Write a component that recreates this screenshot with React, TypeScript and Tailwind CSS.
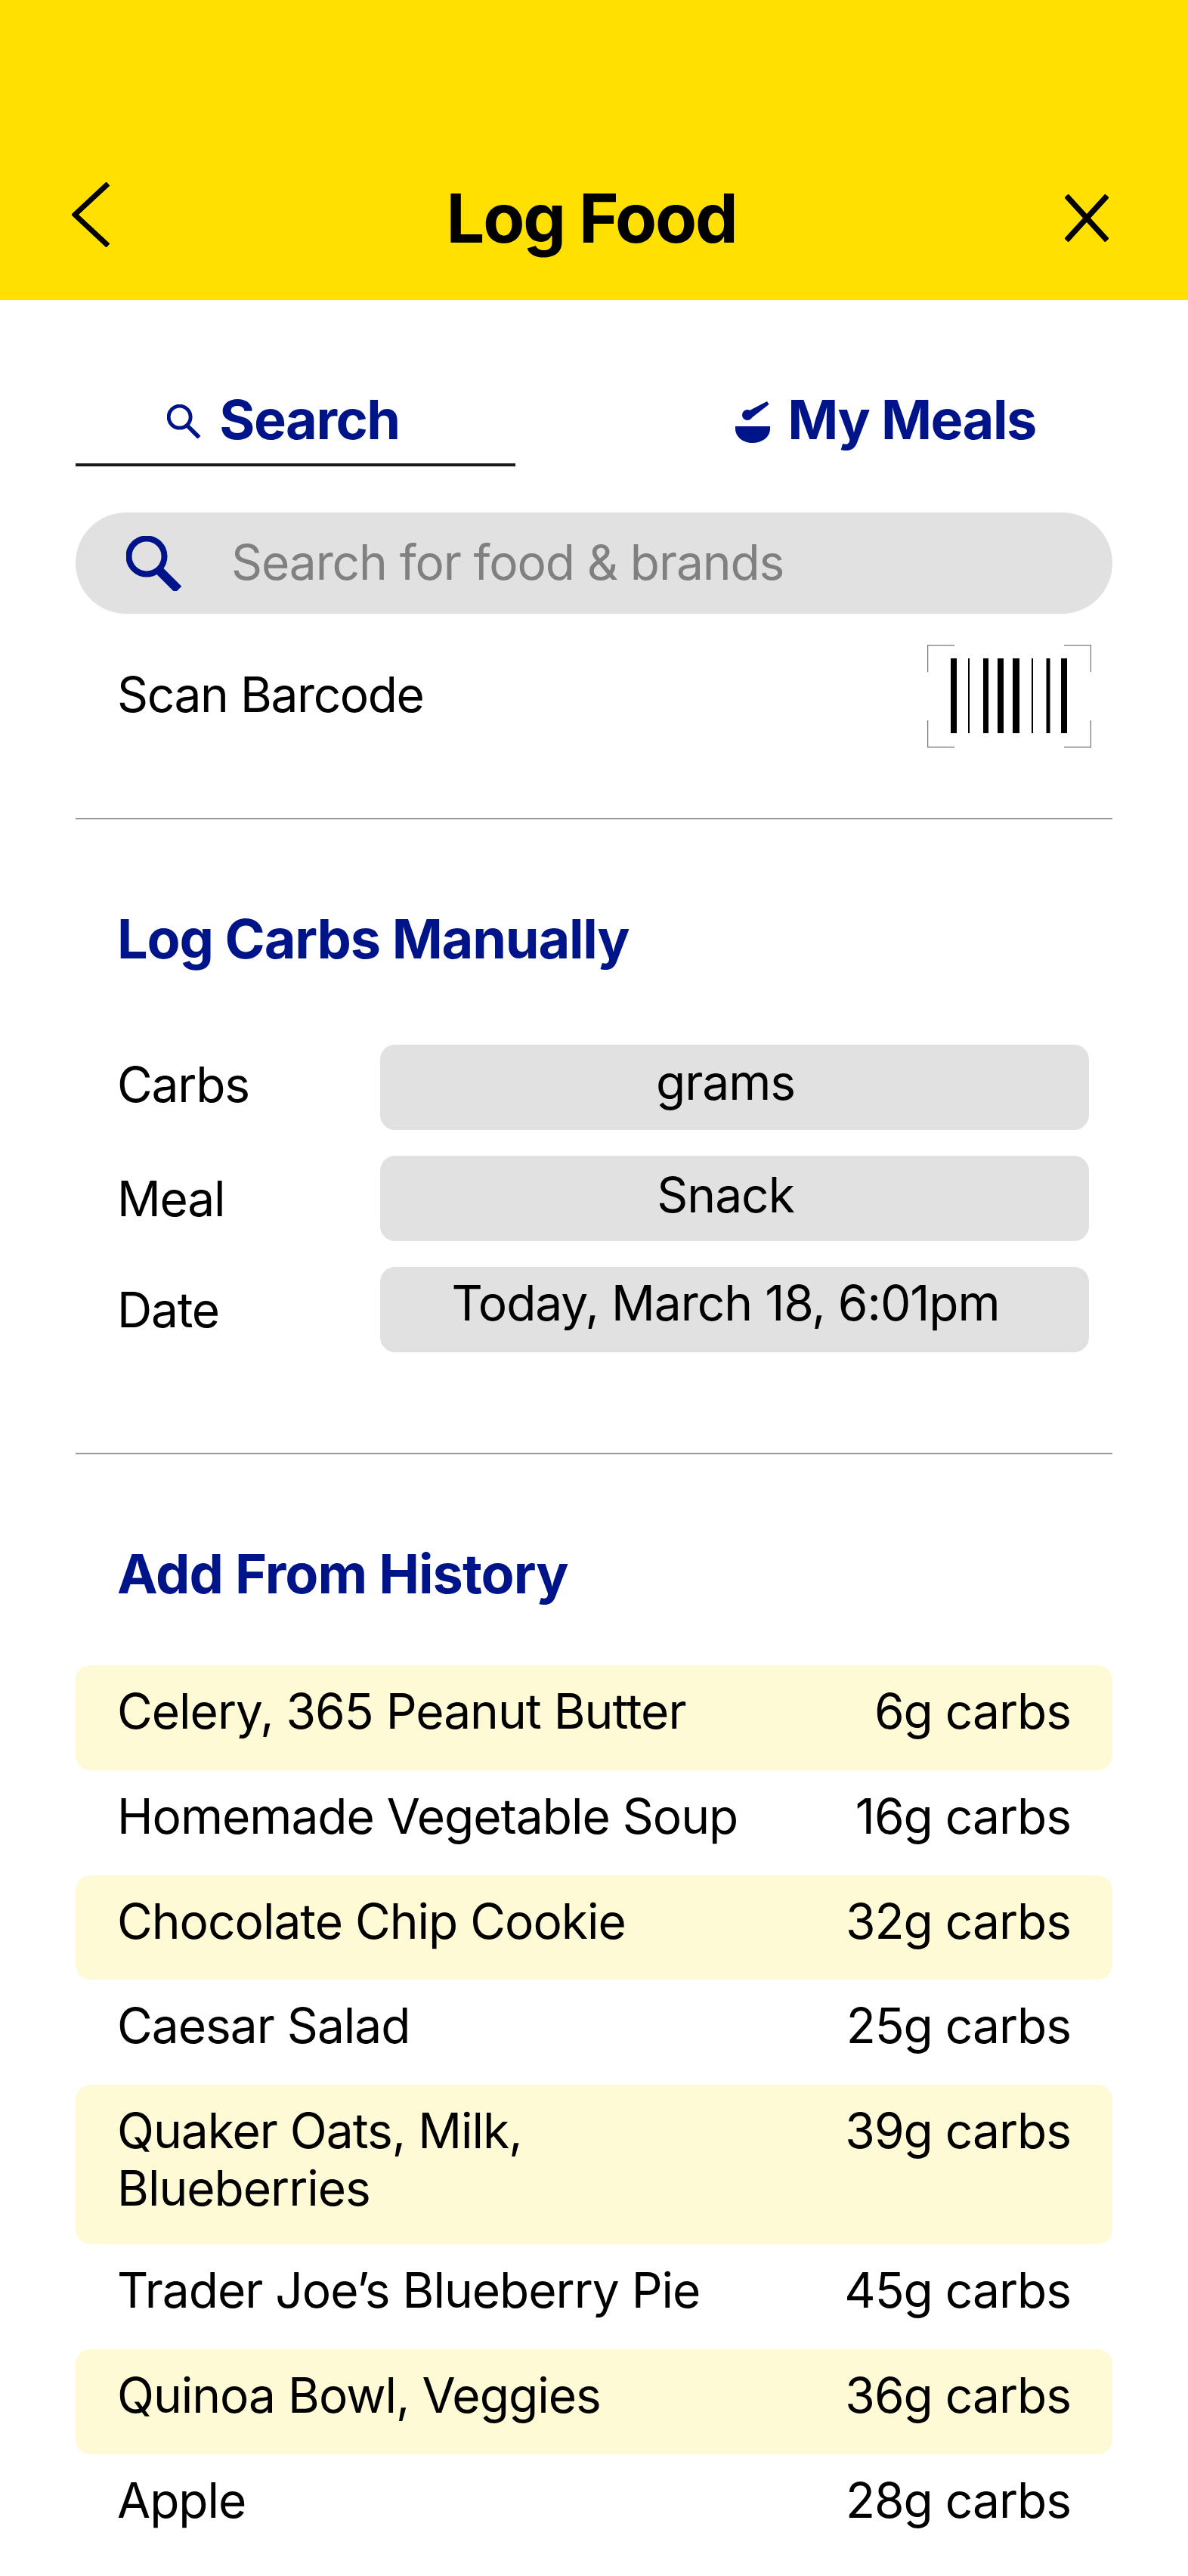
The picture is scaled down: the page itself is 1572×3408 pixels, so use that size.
const font = { fontFamily: '"Inter", "Liberation Sans", sans-serif' };

function SearchIcon({ className, w, h }: { className: string; w: number; h: number }) {
  return (
    <svg viewBox="0 0 73 73" className={className} fill="none" stroke="#001489" strokeWidth={w}>
      <circle cx="27" cy="27" r="23.5" />
      <path d="M44 46 L69 71" strokeWidth={h} />
    </svg>
  );
}

function BowlIcon() {
  return (
    <svg viewBox="0 0 46 55" className="w-[46px] h-[55px] mt-[18px] shrink-0" fill="#001489">
      <path d="M0 33 H46 V36 C46 47 36 55 23 55 C10 55 0 47 0 36 Z" />
      <circle cx="16" cy="18" r="7" />
      <path d="M15 14 L42 0 L44.5 4 L20 23 Z" />
    </svg>
  );
}

function Barcode() {
  const bars = [
    [31, 8], [54, 2], [74, 7], [93, 8], [113, 9], [138, 2], [157.5, 5], [177, 8],
  ];
  return (
    <svg viewBox="0 0 217 136" className="w-[217px] h-[136px] mt-[41px] shrink-0" fill="none">
      {bars.map(([x, w]) => (
        <rect key={x} x={x} y="18" width={w} height="99" fill="#000" />
      ))}
      <path
        d="M.5 36 V.5 H36 M181 .5 H216.5 V36 M.5 100 V135.5 H36 M181 135.5 H216.5 V100"
        stroke="#777"
        strokeWidth="1.5"
      />
    </svg>
  );
}

const fields = [
  { label: 'Carbs', value: 'grams', labelClass: 'pt-[13px]', boxClass: 'pt-[10px]' },
  { label: 'Meal', value: 'Snack', labelClass: 'pt-[17px]', boxClass: 'pt-[12px]' },
  { label: 'Date', value: 'Today, March 18, 6:01pm', labelClass: 'pt-[17px]', boxClass: 'pt-[8px]' },
];

const history = [
  { name: 'Celery, 365 Peanut Butter', carbs: '6g carbs' },
  { name: 'Homemade Vegetable Soup', carbs: '16g carbs' },
  { name: 'Chocolate Chip Cookie', carbs: '32g carbs' },
  { name: 'Caesar Salad', carbs: '25g carbs' },
  { name: 'Quaker Oats, Milk, Blueberries', carbs: '39g carbs', tall: true },
  { name: 'Trader Joe’s Blueberry Pie', carbs: '45g carbs' },
  { name: 'Quinoa Bowl, Veggies', carbs: '36g carbs' },
  { name: 'Apple', carbs: '28g carbs' },
];

export default function App() {
  return (
    <div style={font} className="w-[1572px] h-[3408px] overflow-hidden bg-white text-black">
      <header className="h-[397px] bg-[#ffe000] flex items-start pl-[95px] pr-[105px] pt-[241px]">
        <svg viewBox="0 0 50 86" className="w-[50px] h-[86px] shrink-0" fill="none" stroke="#000" strokeWidth="7">
          <path d="M48 2 L4 43 L48 84" />
        </svg>
        <h1 className="flex-1 ml-[11px] text-center text-[90px] leading-[96px] font-bold tracking-[-2.2px]">Log Food</h1>
        <svg viewBox="0 0 58 63" className="w-[58px] h-[63px] mt-[16px] shrink-0" fill="none" stroke="#000" strokeWidth="7.5">
          <path d="M2 2 L56 61 M56 2 L2 61" />
        </svg>
      </header>

      <main className="px-[100px]">
        <div className="flex pt-[116px] text-[#001489] font-bold text-[72px] leading-[84px] tracking-[-1.5px]">
          <div className="w-[582px] h-[104px] border-b-[4px] border-[#1a1a1a] flex items-start justify-center gap-[24px] pr-[32px]">
            <SearchIcon className="w-[45px] h-[45px] mt-[22px]" w={8} h={9} />
            <span>Search</span>
          </div>
          <div className="flex-1 flex items-start justify-center gap-[23px] pl-[190px]">
            <BowlIcon />
            <span className="whitespace-nowrap">My Meals</span>
          </div>
        </div>

        <div className="mt-[61px] h-[134px] rounded-full bg-[#e2e1e2] flex items-center pl-[67px]">
          <SearchIcon className="w-[73px] h-[73px] shrink-0" w={8} h={12} />
          <span className="ml-[66px] -mt-[3px] text-[64px] leading-[80px] tracking-[-1.1px] text-[#808080]">Search for food &amp; brands</span>
        </div>

        <div className="flex items-start justify-between pl-[55px] pr-[28px] h-[272px] border-b-[2px] border-[#999999]">
          <span className="text-[64px] leading-[80px] tracking-[-1.4px] mt-[67px]">Scan Barcode</span>
          <Barcode />
        </div>

        <h2 className="pl-[55px] mt-[116px] text-[72px] leading-[84px] font-bold text-[#001489] tracking-[-1.2px]">Log Carbs Manually</h2>

        <div className="mt-[98px] pl-[55px] pr-[31px] flex flex-col gap-[34px]">
          {fields.map((f) => (
            <div key={f.label} className="flex h-[113px]">
              <span className={`w-[348px] text-[64px] leading-[80px] tracking-[-1.2px] ${f.labelClass}`}>{f.label}</span>
              <div className={`flex-1 rounded-[20px] bg-[#e2e1e2] pr-[24px] text-center text-[64px] leading-[80px] tracking-[-1px] ${f.boxClass}`}>{f.value}</div>
            </div>
          ))}
        </div>

        <div className="mt-[133px] border-t-[2px] border-[#999999]" />

        <h2 className="pl-[55px] mt-[116px] text-[72px] leading-[84px] font-bold text-[#001489] tracking-[-1px]">Add From History</h2>

        <div className="mt-[79px]">
          {history.map((h, i) => (
            <div
              key={h.name}
              className={`flex justify-between pl-[55px] pr-[55px] pt-[23px] rounded-[20px] text-[64px] leading-[76px] tracking-[-1px] ${h.tall ? 'pb-[36px]' : 'pb-[39.8px]'} ${i % 2 === 0 ? 'bg-[#fefad6]' : ''}`}
            >
              <span className="w-[840px]">{h.name}</span>
              <span>{h.carbs}</span>
            </div>
          ))}
        </div>
      </main>
    </div>
  );
}
